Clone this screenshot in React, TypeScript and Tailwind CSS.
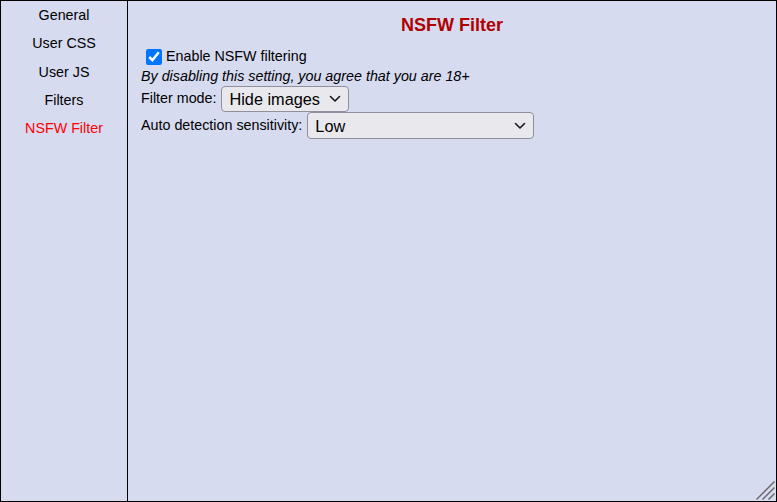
import React from "react";

function Chevron() {
  return (
    <svg
      className="pointer-events-none absolute top-1/2 -translate-y-1/2"
      style={{ right: 8 }}
      width="12"
      height="8"
      viewBox="0 0 12 8"
      fill="none"
    >
      <path d="M1.5 1.5 L6 6 L10.5 1.5" stroke="#1a1a1a" strokeWidth="1.6" strokeLinecap="round" strokeLinejoin="round" />
    </svg>
  );
}

export default function App() {
  const items = ["General", "User CSS", "User JS", "Filters", "NSFW Filter"];
  return (
    <div
      className="w-[777px] h-[502px] border border-black bg-[#d6dbf0] flex text-black text-[14.3px]"
      style={{ fontFamily: '"Liberation Sans", Arial, sans-serif' }}
    >
      <div className="w-[127px] shrink-0 border-r border-black flex flex-col">
        {items.map((it) => (
          <div
            key={it}
            className={
              "text-center leading-[28.3px] h-[28.3px] " +
              (it === "NSFW Filter" ? "text-[#ff0000]" : "text-black")
            }
          >
            {it}
          </div>
        ))}
      </div>
      <div className="flex-1 relative pl-[13px] flex flex-col">
        <div className="-ml-[13px] mt-[14px] leading-[20px] h-[20px] text-center font-bold text-[18px] text-[#b00000]">
          NSFW Filter
        </div>
        <div className="mt-[12px] h-[19px] flex items-center">
          <input
            type="checkbox"
            defaultChecked
            className="w-[16px] h-[16px] ml-[5px] mr-[4px] m-0 accent-[#0075ff]"
          />
          <span className="leading-[19px]">Enable NSFW filtering</span>
        </div>
        <div className="leading-[20px] h-[20px] italic">
          By disabling this setting, you agree that you are 18+
        </div>
        <div className="h-[26px] flex items-center">
          <span className="mr-[5px]">Filter mode:</span>
          <div className="relative h-[26px]">
            <select className="appearance-none w-[128px] h-[26px] rounded-[4px] border border-[#8f8f9d] bg-[#e9e9ed] pl-[7px] text-[16.3px] leading-[20px] outline-none">
              <option>Hide images</option>
            </select>
            <Chevron />
          </div>
        </div>
        <div className="h-[27px] flex items-center">
          <span className="mr-[5px]">Auto detection sensitivity:</span>
          <div className="relative h-[27px]">
            <select className="appearance-none w-[227px] h-[27px] rounded-[4px] border border-[#8f8f9d] bg-[#e9e9ed] pl-[7px] text-[16.3px] leading-[20px] outline-none">
              <option>Low</option>
            </select>
            <Chevron />
          </div>
        </div>
        <svg
          className="absolute right-[1px] bottom-[1px]"
          width="19"
          height="19"
          viewBox="0 0 19 19"
        >
          <path d="M18 1 L1 18 M18 7 L7 18 M18 13 L13 18" stroke="#6b6b6b" strokeWidth="1.5" strokeLinecap="square" />
        </svg>
      </div>
    </div>
  );
}
